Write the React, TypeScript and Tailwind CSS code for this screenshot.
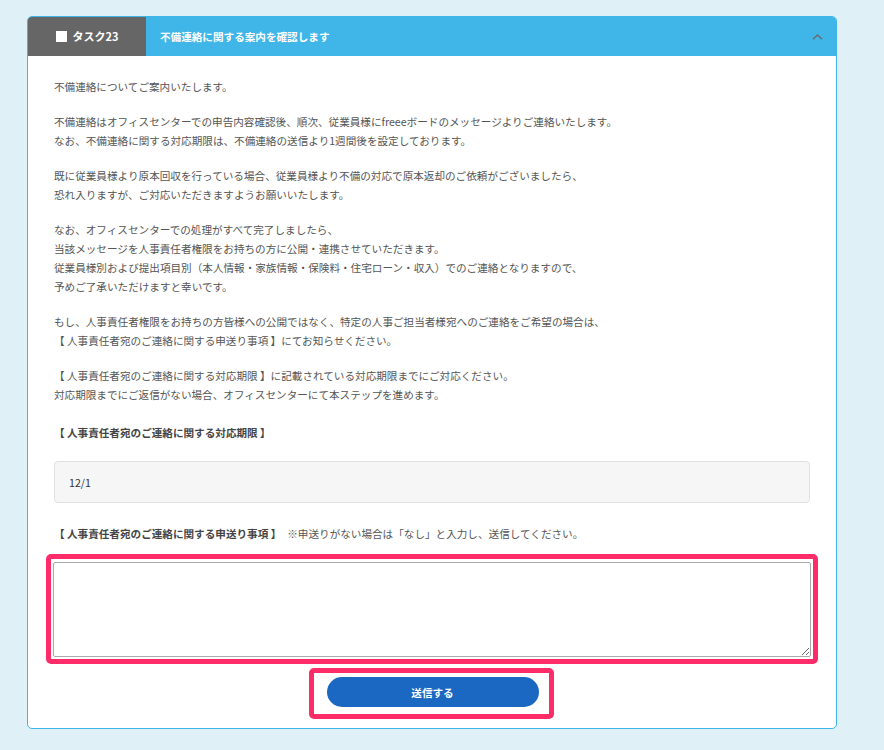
import { useState } from 'react';

const paragraphs: string[][] = [
  ['不備連絡についてご案内いたします。'],
  [
    '不備連絡はオフィスセンターでの申告内容確認後、順次、従業員様にfreeeボードのメッセージよりご連絡いたします。',
    'なお、不備連絡に関する対応期限は、不備連絡の送信より1週間後を設定しております。',
  ],
  [
    '既に従業員様より原本回収を行っている場合、従業員様より不備の対応で原本返却のご依頼がございましたら、',
    '恐れ入りますが、ご対応いただきますようお願いいたします。',
  ],
  [
    'なお、オフィスセンターでの処理がすべて完了しましたら、',
    '当該メッセージを人事責任者権限をお持ちの方に公開・連携させていただきます。',
    '従業員様別および提出項目別（本人情報・家族情報・保険料・住宅ローン・収入）でのご連絡となりますので、',
    '予めご了承いただけますと幸いです。',
  ],
  [
    'もし、人事責任者権限をお持ちの方皆様への公開ではなく、特定の人事ご担当者様宛へのご連絡をご希望の場合は、',
    '【 人事責任者宛のご連絡に関する申送り事項 】にてお知らせください。',
  ],
  [
    '【 人事責任者宛のご連絡に関する対応期限 】に記載されている対応期限までにご対応ください。',
    '対応期限までにご返信がない場合、オフィスセンターにて本ステップを進めます。',
  ],
];

const App = () => {
  const [open, setOpen] = useState(true);
  const [note, setNote] = useState('');

  return (
    <div className="min-h-screen bg-[#dff0f7] pt-4 pl-[27px] font-['Noto_Sans_CJK_JP','Noto_Sans',sans-serif]">
      <div className="w-[810px] overflow-hidden rounded-[5px] border border-[#3db5e6] bg-white">
        <div
          className="flex h-[39px] cursor-pointer bg-[#3fb6e7] text-[10.6px] font-bold text-white"
          onClick={() => setOpen(!open)}
        >
          <div className="flex w-[118px] items-center justify-center gap-[6px] bg-[#666666]">
            <span className="block h-[11px] w-[11px] bg-white" />
            <span className="text-[11px]">タスク23</span>
          </div>
          <div className="flex flex-1 items-center pl-[14px]">不備連絡に関する案内を確認します</div>
          <div className="flex items-center pr-[13px]">
            <svg width="11" height="6" viewBox="0 0 11 6" fill="none">
              <path d="M1 5.2 L5.5 1 L10 5.2" stroke="#6b6b6b" strokeWidth="1.4" />
            </svg>
          </div>
        </div>

        {open && (
          <div className="px-[26px] pt-[21px] pb-[9px] text-[10.6px] leading-[19px] text-[#555555]">
            <div className="flex flex-col gap-4">
              {paragraphs.map((p) => (
                <p key={p[0]}>
                  {p.map((line) => (
                    <span key={line} className="block">
                      {line}
                    </span>
                  ))}
                </p>
              ))}
            </div>

            <p className="mt-[19px] font-bold text-[#444444]">【 人事責任者宛のご連絡に関する対応期限 】</p>

            <div className="mt-[19px] flex h-[42px] items-center rounded-[4px] border border-[#e0e0e0] bg-[#f6f6f6] pl-[14px] text-[#333333]">
              12/1
            </div>

            <p className="mt-[21px]">
              <span className="font-bold text-[#444444]">【 人事責任者宛のご連絡に関する申送り事項 】</span>
              <span className="ml-[6px]">※申送りがない場合は「なし」と入力し、送信してください。</span>
            </p>

            <div className="-mx-[8px] mt-[11px] rounded-[5px] border-[5px] border-[#ff2c6a] px-[2px] pt-[3px] pb-[2px]">
              <textarea
                value={note}
                onChange={(e) => setNote(e.target.value)}
                className="block h-[95px] w-full resize-y rounded-[2px] border border-[#a9a9a9] bg-white p-1 outline-none"
              />
            </div>

            <div className="mt-[4px] flex justify-center">
              <div className="mr-[2px] rounded-[5px] border-[5px] border-[#ff2c6a] pt-[4px] pr-[10px] pb-[7px] pl-[13px]">
                <button className="h-[30px] w-[212px] rounded-full bg-[#1b68c3] text-[10.6px] font-bold text-white">
                  送信する
                </button>
              </div>
            </div>
          </div>
        )}
      </div>
    </div>
  );
};

export default App;
